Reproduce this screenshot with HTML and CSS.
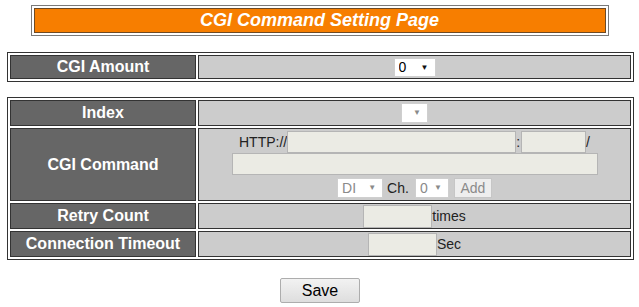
FILE: index.html
```html
<!DOCTYPE html>
<html>
    <head>
        <link rel="stylesheet" href="styles.css">
    </head>
    <body>
        <table class="title-table">
            <tr><td>CGI Command Setting Page</td></tr>
        </table>

        <table class="form-table amount-table">
            <tr>
                <th>CGI Amount</th>
                <td>
                    <span class="sel sel-amount"><select><option>0</option></select></span>
                </td>
            </tr>
        </table>

        <table class="form-table main-table">
            <tr class="row-index">
                <th>Index</th>
                <td>
                    <span class="sel sel-index sel-off"><select disabled></select></span>
                </td>
            </tr>
            <tr class="row-cgi">
                <th>CGI Command</th>
                <td>
                    <div class="line">
                        <span class="txt">HTTP://</span>
                        <input type="text" class="inp inp-host" disabled>
                        <span class="txt">:</span>
                        <input type="text" class="inp inp-port" disabled>
                        <span class="txt">/</span>
                    </div>
                    <div class="line">
                        <input type="text" class="inp inp-path" disabled>
                    </div>
                    <div class="line line-tools">
                        <span class="sel sel-type sel-off"><select disabled><option>DI</option></select></span>
                        <span class="txt ch">Ch.</span>
                        <span class="sel sel-ch sel-off"><select disabled><option>0</option></select></span>
                        <button type="button" class="add-btn" disabled>Add</button>
                    </div>
                </td>
            </tr>
            <tr class="row-small">
                <th>Retry Count</th>
                <td>
                    <div class="line">
                        <input type="text" class="inp inp-num" disabled><span class="txt">times</span>
                    </div>
                </td>
            </tr>
            <tr class="row-small">
                <th>Connection Timeout</th>
                <td>
                    <div class="line">
                        <input type="text" class="inp inp-num" disabled><span class="txt">Sec</span>
                    </div>
                </td>
            </tr>
        </table>

        <div class="save-bar">
            <button type="button" class="save-btn">Save</button>
        </div>
    </body>
</html>
```
FILE: styles.css
```css
* {
    font-family: "Liberation Sans", Arial, sans-serif;
}

body {
    margin: 0;
    background: #ffffff;
}

table {
    border-collapse: separate;
    border-spacing: 2px;
}

.title-table {
    width: 578px;
    margin: 5px auto 0 auto;
    border: 1px solid #7a7a7a;
}

.title-table td {
    height: 25px;
    box-sizing: border-box;
    padding: 0;
    border: 1px solid #6e4a24;
    background: #f77e00;
    color: #ffffff;
    font-size: 18px;
    font-weight: bold;
    font-style: italic;
    text-align: center;
}

.form-table {
    width: 627px;
    margin-left: 7px;
    border: 1px solid #333333;
}

.amount-table {
    margin-top: 16px;
}

.main-table {
    margin-top: 15px;
}

.form-table th {
    width: 186px;
    box-sizing: border-box;
    padding: 0;
    border: 1px solid #333333;
    background: #666666;
    color: #ffffff;
    font-size: 16px;
    font-weight: bold;
    text-align: center;
}

.form-table td {
    box-sizing: border-box;
    padding: 0;
    border: 1px solid #333333;
    background: #cccccc;
    text-align: center;
    vertical-align: middle;
}

.amount-table td,
.amount-table th {
    height: 24px;
}

.row-index th,
.row-index td {
    height: 26px;
}

.row-cgi th,
.row-cgi td {
    height: 73px;
}

.row-small th,
.row-small td {
    height: 26px;
}

.line {
    display: flex;
    justify-content: center;
    align-items: center;
}

.txt {
    font-size: 14px;
    color: #222222;
}

.inp {
    box-sizing: border-box;
    height: 22px;
    margin: 0;
    padding: 0 2px;
    border: 1px solid #b5b5b5;
    background: #ebebe4;
}

.inp-host {
    width: 229px;
}

.inp-port {
    width: 65px;
    margin-left: 1px;
}

.inp-path {
    width: 366px;
}

.inp-num {
    width: 69px;
    height: 23px;
}

.line-tools {
    margin-top: 3px;
}

.sel {
    position: relative;
    display: inline-block;
}

.sel select {
    -webkit-appearance: none;
    appearance: none;
    box-sizing: border-box;
    height: 19px;
    margin: 0;
    padding: 0 0 0 4px;
    border: 1px solid #cfcfcf;
    background: #ffffff;
    color: #000000;
    font-size: 14px;
    outline: none;
}

.sel::after {
    content: "\25BC";
    position: absolute;
    right: 7px;
    top: 5px;
    font-size: 8px;
    color: #111111;
    pointer-events: none;
}

.sel-off select {
    color: #8a8a8a;
    opacity: 1;
}

.sel-off::after {
    color: #8a8a8a;
}

.sel-amount select {
    width: 42px;
}

.sel-index select {
    width: 27px;
    height: 20px;
}

.sel-type select {
    width: 46px;
    height: 20px;
}

.sel-ch select {
    width: 34px;
    height: 20px;
}

.ch {
    margin: 0 6px 0 4px;
}

.add-btn {
    box-sizing: border-box;
    width: 38px;
    height: 20px;
    margin-left: 5px;
    padding: 0;
    border: 1px solid #c6c6c6;
    background: #eeeeee;
    color: #8a8a8a;
    font-size: 14px;
}

.save-bar {
    display: flex;
    justify-content: center;
    margin-top: 18px;
}

.save-btn {
    box-sizing: border-box;
    width: 80px;
    height: 25px;
    margin-left: 1px;
    border: 1px solid #adadad;
    border-radius: 2px;
    background: linear-gradient(#f2f2f2, #dedede);
    color: #000000;
    font-size: 16px;
}
```
